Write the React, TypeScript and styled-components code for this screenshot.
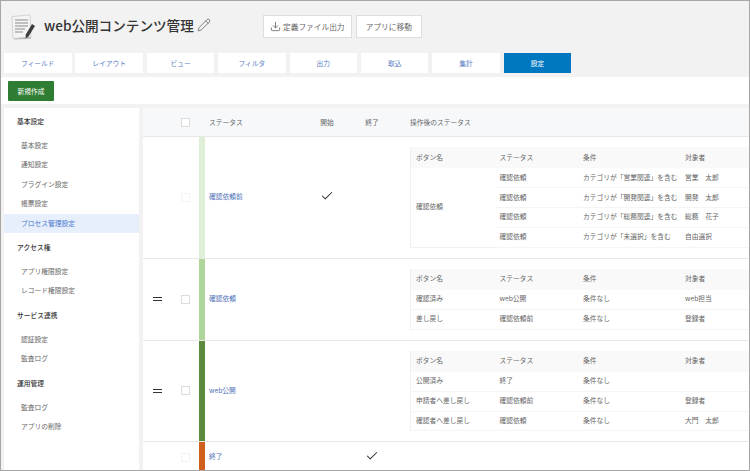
import React from "react";
import styled, { createGlobalStyle } from "styled-components";
import { Download, Pencil, Check } from "lucide-react";

const tabs = ["フィールド", "レイアウト", "ビュー", "フィルタ", "出力", "取込", "集計", "設定"];

const menu = [
  { title: "基本設定", items: ["基本設定", "通知設定", "プラグイン設定", "帳票設定", "プロセス管理設定"] },
  { title: "アクセス権", items: ["アプリ権限設定", "レコード権限設定"] },
  { title: "サービス連携", items: ["認証設定", "監査ログ"] },
  { title: "運用管理", items: ["監査ログ", "アプリの削除"] },
];

const processes = [
  {
    name: "確認依頼前",
    color: "#dfeed7",
    faded: true,
    movable: false,
    start: true,
    actions: [
      {
        button: "確認依頼",
        lines: [
          ["確認依頼", "カテゴリが「営業関連」を含む", "営業　太郎"],
          ["確認依頼", "カテゴリが「開発関連」を含む", "開発　太郎"],
          ["確認依頼", "カテゴリが「総務関連」を含む", "総務　花子"],
          ["確認依頼", "カテゴリが「未選択」を含む", "自由選択"],
        ],
      },
    ],
  },
  {
    name: "確認依頼",
    color: "#aed69a",
    faded: false,
    movable: true,
    actions: [
      { button: "確認済み", lines: [["web公開", "条件なし", "web担当"]] },
      { button: "差し戻し", lines: [["確認依頼前", "条件なし", "登録者"]] },
    ],
  },
  {
    name: "web公開",
    color: "#5a8a3c",
    faded: false,
    movable: true,
    actions: [
      { button: "公開済み", lines: [["終了", "条件なし", ""]] },
      { button: "申請者へ差し戻し", lines: [["確認依頼前", "条件なし", "登録者"]] },
      { button: "確認者へ差し戻し", lines: [["確認依頼", "条件なし", "大門　太郎"]] },
    ],
  },
];

const GlobalStyle = createGlobalStyle`
  html, body {
    margin: 0;
    padding: 0;
    background: #f2f2f2;
  }
  * {
    box-sizing: border-box;
  }
`;

const Page = styled.div`
  width: 750px;
  height: 471px;
  overflow: hidden;
  display: flex;
  flex-direction: column;
  background: #f2f2f2;
  border: 1px solid #a6a6a6;
  font-family: "Noto Sans CJK JP", "Noto Sans", sans-serif;
  font-size: 6.75px;
  color: #666;
`;

const Header = styled.header`
  height: 52px;
  flex: none;
  display: flex;
  align-items: center;
  padding: 0 0 1px 9px;
`;

const Title = styled.h1`
  margin: 0 0 4px 8px;
  font-size: 13.6px;
  font-weight: 500;
  color: #333;
  white-space: nowrap;
`;

const EditIcon = styled(Pencil)`
  margin: 0 52px 4px 3px;
  color: #666;
`;

const HeaderButton = styled.button<{ $width: number }>`
  width: ${(p) => p.$width}px;
  height: 23px;
  margin-right: 4px;
  padding: 0;
  display: flex;
  align-items: center;
  justify-content: center;
  gap: 2px;
  background: #fff;
  border: 1px solid #ddd;
  font: inherit;
  font-size: 7.7px;
  color: #666;
`;

const Tabs = styled.nav`
  display: flex;
  flex: none;
  gap: 3.9px;
  padding-left: 3px;
`;

const Tab = styled.div<{ $active?: boolean }>`
  width: 67.5px;
  height: 20px;
  display: flex;
  align-items: center;
  justify-content: center;
  background: ${(p) => (p.$active ? "#0078c1" : "#fff")};
  color: ${(p) => (p.$active ? "#fff" : "#5b7cc4")};
`;

const ActionBar = styled.div`
  height: 27px;
  flex: none;
  margin-top: 4px;
  padding: 4px 7px;
  background: #fff;
`;

const NewButton = styled.button`
  width: 46px;
  height: 20px;
  padding: 0;
  background: #2e7d32;
  border: none;
  border-radius: 1px;
  font: inherit;
  color: #fff;
`;

const Content = styled.div`
  flex: 1;
  min-height: 0;
  display: flex;
  gap: 4px;
  margin-top: 4px;
  padding-left: 3px;
`;

const Sidebar = styled.aside`
  width: 135px;
  flex: none;
  padding-top: 3px;
  background: #fff;
`;

const GroupTitle = styled.div`
  height: 20px;
  margin-bottom: 5px;
  padding-left: 13px;
  line-height: 20px;
  color: #333;
  font-weight: 500;
`;

const Group = styled.div`
  margin-bottom: 4px;
`;

const MenuItem = styled.div<{ $active?: boolean }>`
  height: 19.4px;
  padding-left: 17px;
  line-height: 18.6px;
  background: ${(p) => (p.$active ? "#e6effb" : "transparent")};
  color: ${(p) => (p.$active ? "#4a78d0" : "#666")};
`;

const Main = styled.main`
  flex: 1;
  min-width: 0;
  overflow: hidden;
  background: #fff;
`;

const columns = "38px 18px 6px 100px 44px 46px 1fr";

const HeaderRow = styled.div`
  height: 29px;
  display: grid;
  grid-template-columns: ${columns};
  align-items: center;
  background: #f7f8fa;
  border-bottom: 1px solid #e8e8e8;
`;

const HeaderLabel = styled.div<{ $center?: boolean; $inset?: number }>`
  padding-left: ${(p) => p.$inset ?? 0}px;
  text-align: ${(p) => (p.$center ? "center" : "left")};
`;

const ProcessRow = styled.div`
  display: grid;
  grid-template-columns: ${columns};
  align-items: center;
  border-bottom: 1px solid #e8e8e8;
`;

const Handle = styled.div`
  justify-self: start;
  margin-left: 10px;
  width: 9px;
  height: 4px;
  border-top: 1px solid #333;
  border-bottom: 1px solid #333;
`;

const CheckBox = styled.span<{ $faded?: boolean }>`
  display: block;
  width: 9px;
  height: 9px;
  background: #fff;
  border: 1px solid ${(p) => (p.$faded ? "#f3f3f3" : "#dcdcdc")};
`;

const ColorBar = styled.div<{ $color: string }>`
  align-self: stretch;
  background: ${(p) => p.$color};
`;

const FinalBar = styled(ColorBar)`
  align-self: start;
  height: 30px;
`;

const StatusName = styled.div`
  padding: 0 0 2px 4px;
  color: #4f70b8;
`;

const Mark = styled.div`
  display: flex;
  justify-content: center;
  padding-bottom: 2px;
  color: #333;
`;

const ActionCell = styled.div`
  padding: 10px 0 10px 15px;
`;

const ActionTable = styled.table`
  width: 345px;
  table-layout: fixed;
  border-collapse: collapse;
  border-left: 1px solid #f0f0f0;
  border-bottom: 1px solid #f0f0f0;
`;

const Th = styled.th`
  height: 21px;
  padding: 0 0 2px 5px;
  background: #f9f9f9;
  font-weight: 400;
  text-align: left;
`;

const Td = styled.td`
  height: 19.75px;
  padding: 0 0 2px 5px;
  border-bottom: 1px solid #f5f5f5;
  white-space: nowrap;
`;

const LastTd = styled(Td)`
  border-bottom: none;
`;

const StatusCol = styled.col<{ $width: number }>`
  width: ${(p) => p.$width}px;
`;

const FinalRow = styled.div`
  height: 27px;
  display: grid;
  grid-template-columns: ${columns};
  align-items: center;
`;

const DocIcon = () => (
  <svg width="26" height="26" viewBox="0 0 26 26">
    <path d="M2 2.5 L20 1 L21 23 L3 24.5 Z" fill="#f4f4f4" stroke="#d4d4d4" />
    <path d="M4 24.5 L21 23 L21 25 L4 25.5 Z" fill="#bdbdbd" />
    <path
      d="M5 6 H18 M5 9 H18 M5 12 H18 M5 15 H15 M5 18 H13"
      stroke="#8a8a8a"
      strokeWidth="1"
    />
    <path d="M22 10 L25 12 L18.5 22.5 L15.5 24.5 L15.8 20.5 Z" fill="#3d3d3d" />
  </svg>
);

const ActionRows = ({ actions }: { actions: (typeof processes)[number]["actions"] }) => {
  const merged = actions.length === 1 && actions[0].lines.length > 1;
  return (
    <ActionTable>
      <colgroup>
        <StatusCol $width={84} />
        <StatusCol $width={83.5} />
        <StatusCol $width={102} />
        <StatusCol $width={75.5} />
      </colgroup>
      <thead>
        <tr>
          <Th>ボタン名</Th>
          <Th>ステータス</Th>
          <Th>条件</Th>
          <Th>対象者</Th>
        </tr>
      </thead>
      <tbody>
        {actions.map((action) =>
          action.lines.map((line, i) => (
            <tr key={action.button + i}>
              {i === 0 &&
                (merged ? (
                  <LastTd rowSpan={action.lines.length}>{action.button}</LastTd>
                ) : (
                  <Td>{action.button}</Td>
                ))}
              {line.map((text, j) => (
                <Td key={j}>{text}</Td>
              ))}
            </tr>
          ))
        )}
      </tbody>
    </ActionTable>
  );
};

const App = () => {
  return (
    <Page>
      <GlobalStyle />
      <Header>
        <DocIcon />
        <Title>web公開コンテンツ管理</Title>
        <EditIcon size={14} strokeWidth={1.4} />
        <HeaderButton $width={89}>
          <Download size={11} strokeWidth={1.5} color="#444" />
          定義ファイル出力
        </HeaderButton>
        <HeaderButton $width={66}>アプリに移動</HeaderButton>
      </Header>
      <Tabs>
        {tabs.map((tab) => (
          <Tab key={tab} $active={tab === "設定"}>
            {tab}
          </Tab>
        ))}
      </Tabs>
      <ActionBar>
        <NewButton>新規作成</NewButton>
      </ActionBar>
      <Content>
        <Sidebar>
          {menu.map((group) => (
            <Group key={group.title}>
              <GroupTitle>{group.title}</GroupTitle>
              {group.items.map((item) => (
                <MenuItem key={item} $active={item === "プロセス管理設定"}>
                  {item}
                </MenuItem>
              ))}
            </Group>
          ))}
        </Sidebar>
        <Main>
          <HeaderRow>
            <span />
            <CheckBox />
            <span />
            <HeaderLabel $inset={4}>ステータス</HeaderLabel>
            <HeaderLabel $center>開始</HeaderLabel>
            <HeaderLabel $center>終了</HeaderLabel>
            <HeaderLabel $inset={15}>操作後のステータス</HeaderLabel>
          </HeaderRow>
          {processes.map((process) => (
            <ProcessRow key={process.name}>
              {process.movable ? <Handle /> : <span />}
              <CheckBox $faded={process.faded} />
              <ColorBar $color={process.color} />
              <StatusName>{process.name}</StatusName>
              <Mark>{process.start && <Check size={14} strokeWidth={1.8} />}</Mark>
              <span />
              <ActionCell>
                <ActionRows actions={process.actions} />
              </ActionCell>
            </ProcessRow>
          ))}
          <FinalRow>
            <span />
            <CheckBox $faded />
            <FinalBar $color="#cf5f1c" />
            <StatusName>終了</StatusName>
            <span />
            <Mark>
              <Check size={14} strokeWidth={1.8} />
            </Mark>
            <span />
          </FinalRow>
        </Main>
      </Content>
    </Page>
  );
};

export default App;
